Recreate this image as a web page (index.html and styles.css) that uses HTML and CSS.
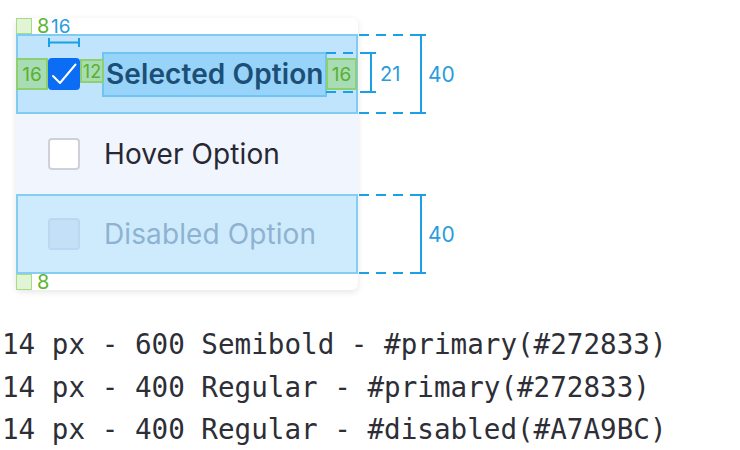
FILE: index.html
```html
<!DOCTYPE html>
<html>
<head>
<meta charset="utf-8">
<link rel="stylesheet" href="styles.css">
</head>
<body>
<div class="spec">
  <div class="card">
    <div class="option option-selected">
      <span class="box box-checked">
        <svg viewBox="0 0 32 32" width="32" height="32"><polyline points="5,18 12,25 27.5,6.5" fill="none" stroke="#fff" stroke-width="2" stroke-linecap="round" stroke-linejoin="round"/></svg>
      </span>
      <span class="label label-selected">Selected Option</span>
    </div>
    <div class="option option-hover">
      <span class="box box-empty"></span>
      <span class="label">Hover Option</span>
    </div>
    <div class="option option-disabled">
      <span class="box box-disabled"></span>
      <span class="label label-disabled">Disabled Option</span>
    </div>
  </div>

  <div class="notes">
    <div class="note">14 px - 600 Semibold - #primary(#272833)</div>
    <div class="note">14 px - 400 Regular - #primary(#272833)</div>
    <div class="note">14 px - 400 Regular - #disabled(#A7A9BC)</div>
  </div>

  <div class="pad pad-top"><span class="pad-sq"></span><span class="pad-num">8</span></div>
  <div class="pad pad-bottom"><span class="pad-sq"></span><span class="pad-num">8</span></div>
  <div class="gbox gbox-left">16</div>
  <div class="gbox gbox-mid">12</div>
  <div class="gbox gbox-right">16</div>
  <div class="dim dim-top">16</div>
  <div class="dim dim-21">21</div>
  <div class="dim dim-40a">40</div>
  <div class="dim dim-40b">40</div>

  <svg class="lines" width="740" height="450" viewBox="0 0 740 450">
    <g stroke="#1b9fe6" stroke-width="2" fill="none">
      <line x1="48" y1="42.5" x2="80" y2="42.5"/>
      <line x1="49" y1="38" x2="49" y2="47"/>
      <line x1="79" y1="38" x2="79" y2="47"/>

      <g stroke-dasharray="10 7">
        <line x1="359" y1="35" x2="426" y2="35"/>
        <line x1="359" y1="113" x2="426" y2="113"/>
        <line x1="359" y1="195" x2="426" y2="195"/>
        <line x1="359" y1="273" x2="426" y2="273"/>
        <line x1="326" y1="53" x2="377" y2="53"/>
        <line x1="326" y1="92" x2="377" y2="92"/>
      </g>
      <line x1="421" y1="35" x2="421" y2="113"/>
      <line x1="416" y1="35" x2="426" y2="35"/>
      <line x1="416" y1="113" x2="426" y2="113"/>

      <line x1="421" y1="195" x2="421" y2="273"/>
      <line x1="416" y1="195" x2="426" y2="195"/>
      <line x1="416" y1="273" x2="426" y2="273"/>

      <line x1="371" y1="53" x2="371" y2="92"/>
      <line x1="367" y1="53" x2="376" y2="53"/>
      <line x1="367" y1="92" x2="376" y2="92"/>
    </g>
  </svg>
</div>
</body>
</html>
```

FILE: styles.css
```css
* { box-sizing: border-box; }
html, body { margin: 0; padding: 0; background: #fff; }
body { font-family: Inter, "Noto Sans", sans-serif; }

.spec {
  position: relative;
  width: 740px;
  height: 450px;
  overflow: hidden;
  padding-top: 18px;
}

.card {
  margin-left: 16px;
  width: 342px;
  padding: 16px 0;
  background: #fff;
  border-radius: 6px;
  box-shadow: 0 2px 6px rgba(39, 40, 51, 0.12);
}

.option {
  height: 80px;
  display: flex;
  align-items: center;
  gap: 24px;
  padding-left: 32px;
  font-size: 28px;
  color: #272833;
}

.option-selected {
  background: #bfe4fc;
  box-shadow: inset 0 0 0 2px #80cbf4;
}
.option-hover { background: #f1f5fe; }
.option-disabled {
  background: #cdebfd;
  box-shadow: inset 0 0 0 2px #86cdf4;
}

.box {
  width: 32px;
  height: 32px;
  border-radius: 4px;
  flex: none;
  display: block;
}
.box svg { display: block; }
.box-checked { background: #0b6cf4; }
.box-empty { background: #fff; border: 2px solid #cfd0db; }
.box-disabled { background: #c3e0f6; border: 2px solid #b9d9f2; }

.label { line-height: 41px; white-space: nowrap; letter-spacing: 0.1px; }
.label-selected {
  font-weight: 600;
  color: #1c4f75;
  background: #98d4fa;
  box-shadow: 0 0 0 2px #70c4f2;
  padding: 0 2px;
  width: 221px;
}
.label-disabled { color: #8fb2d1; }

.notes {
  margin-top: 34px;
  padding-left: 2px;
  font-family: "DejaVu Sans Mono", "Liberation Mono", monospace;
  font-size: 27.6px;
  line-height: 42.5px;
  color: #2d2e36;
}
.note { white-space: nowrap; }

/* annotations over the content */
.pad {
  position: absolute;
  left: 16px;
  display: flex;
  align-items: center;
  gap: 5px;
}
.pad-top { top: 18px; }
.pad-bottom { top: 274px; }
.pad-sq {
  width: 16px;
  height: 16px;
  background: #e1f5d6;
  border: 1.5px solid #a6db88;
}
.pad-num {
  font-size: 20px;
  line-height: 16px;
  color: #5db52f;
}

.gbox {
  position: absolute;
  display: flex;
  align-items: center;
  justify-content: center;
  background: rgba(150, 214, 120, 0.55);
  border: 2px solid #8ed06e;
  color: #59b12c;
  font-size: 19px;
}
.gbox-left { left: 16px; top: 58px; width: 32px; height: 32px; }
.gbox-mid { left: 80px; top: 59px; width: 24px; height: 24px; font-size: 18px; }
.gbox-right { left: 326px; top: 58px; width: 31px; height: 32px; }

.dim {
  position: absolute;
  color: #2a9cdd;
  font-size: 20px;
  line-height: 20px;
}
.dim-top { left: 51px; top: 17px; font-size: 19px; }
.dim-21 { left: 380px; top: 64px; }
.dim-40a { left: 428px; top: 65px; font-size: 21px; }
.dim-40b { left: 428px; top: 225px; font-size: 21px; }

.lines {
  position: absolute;
  left: 0;
  top: 0;
  pointer-events: none;
}
```
